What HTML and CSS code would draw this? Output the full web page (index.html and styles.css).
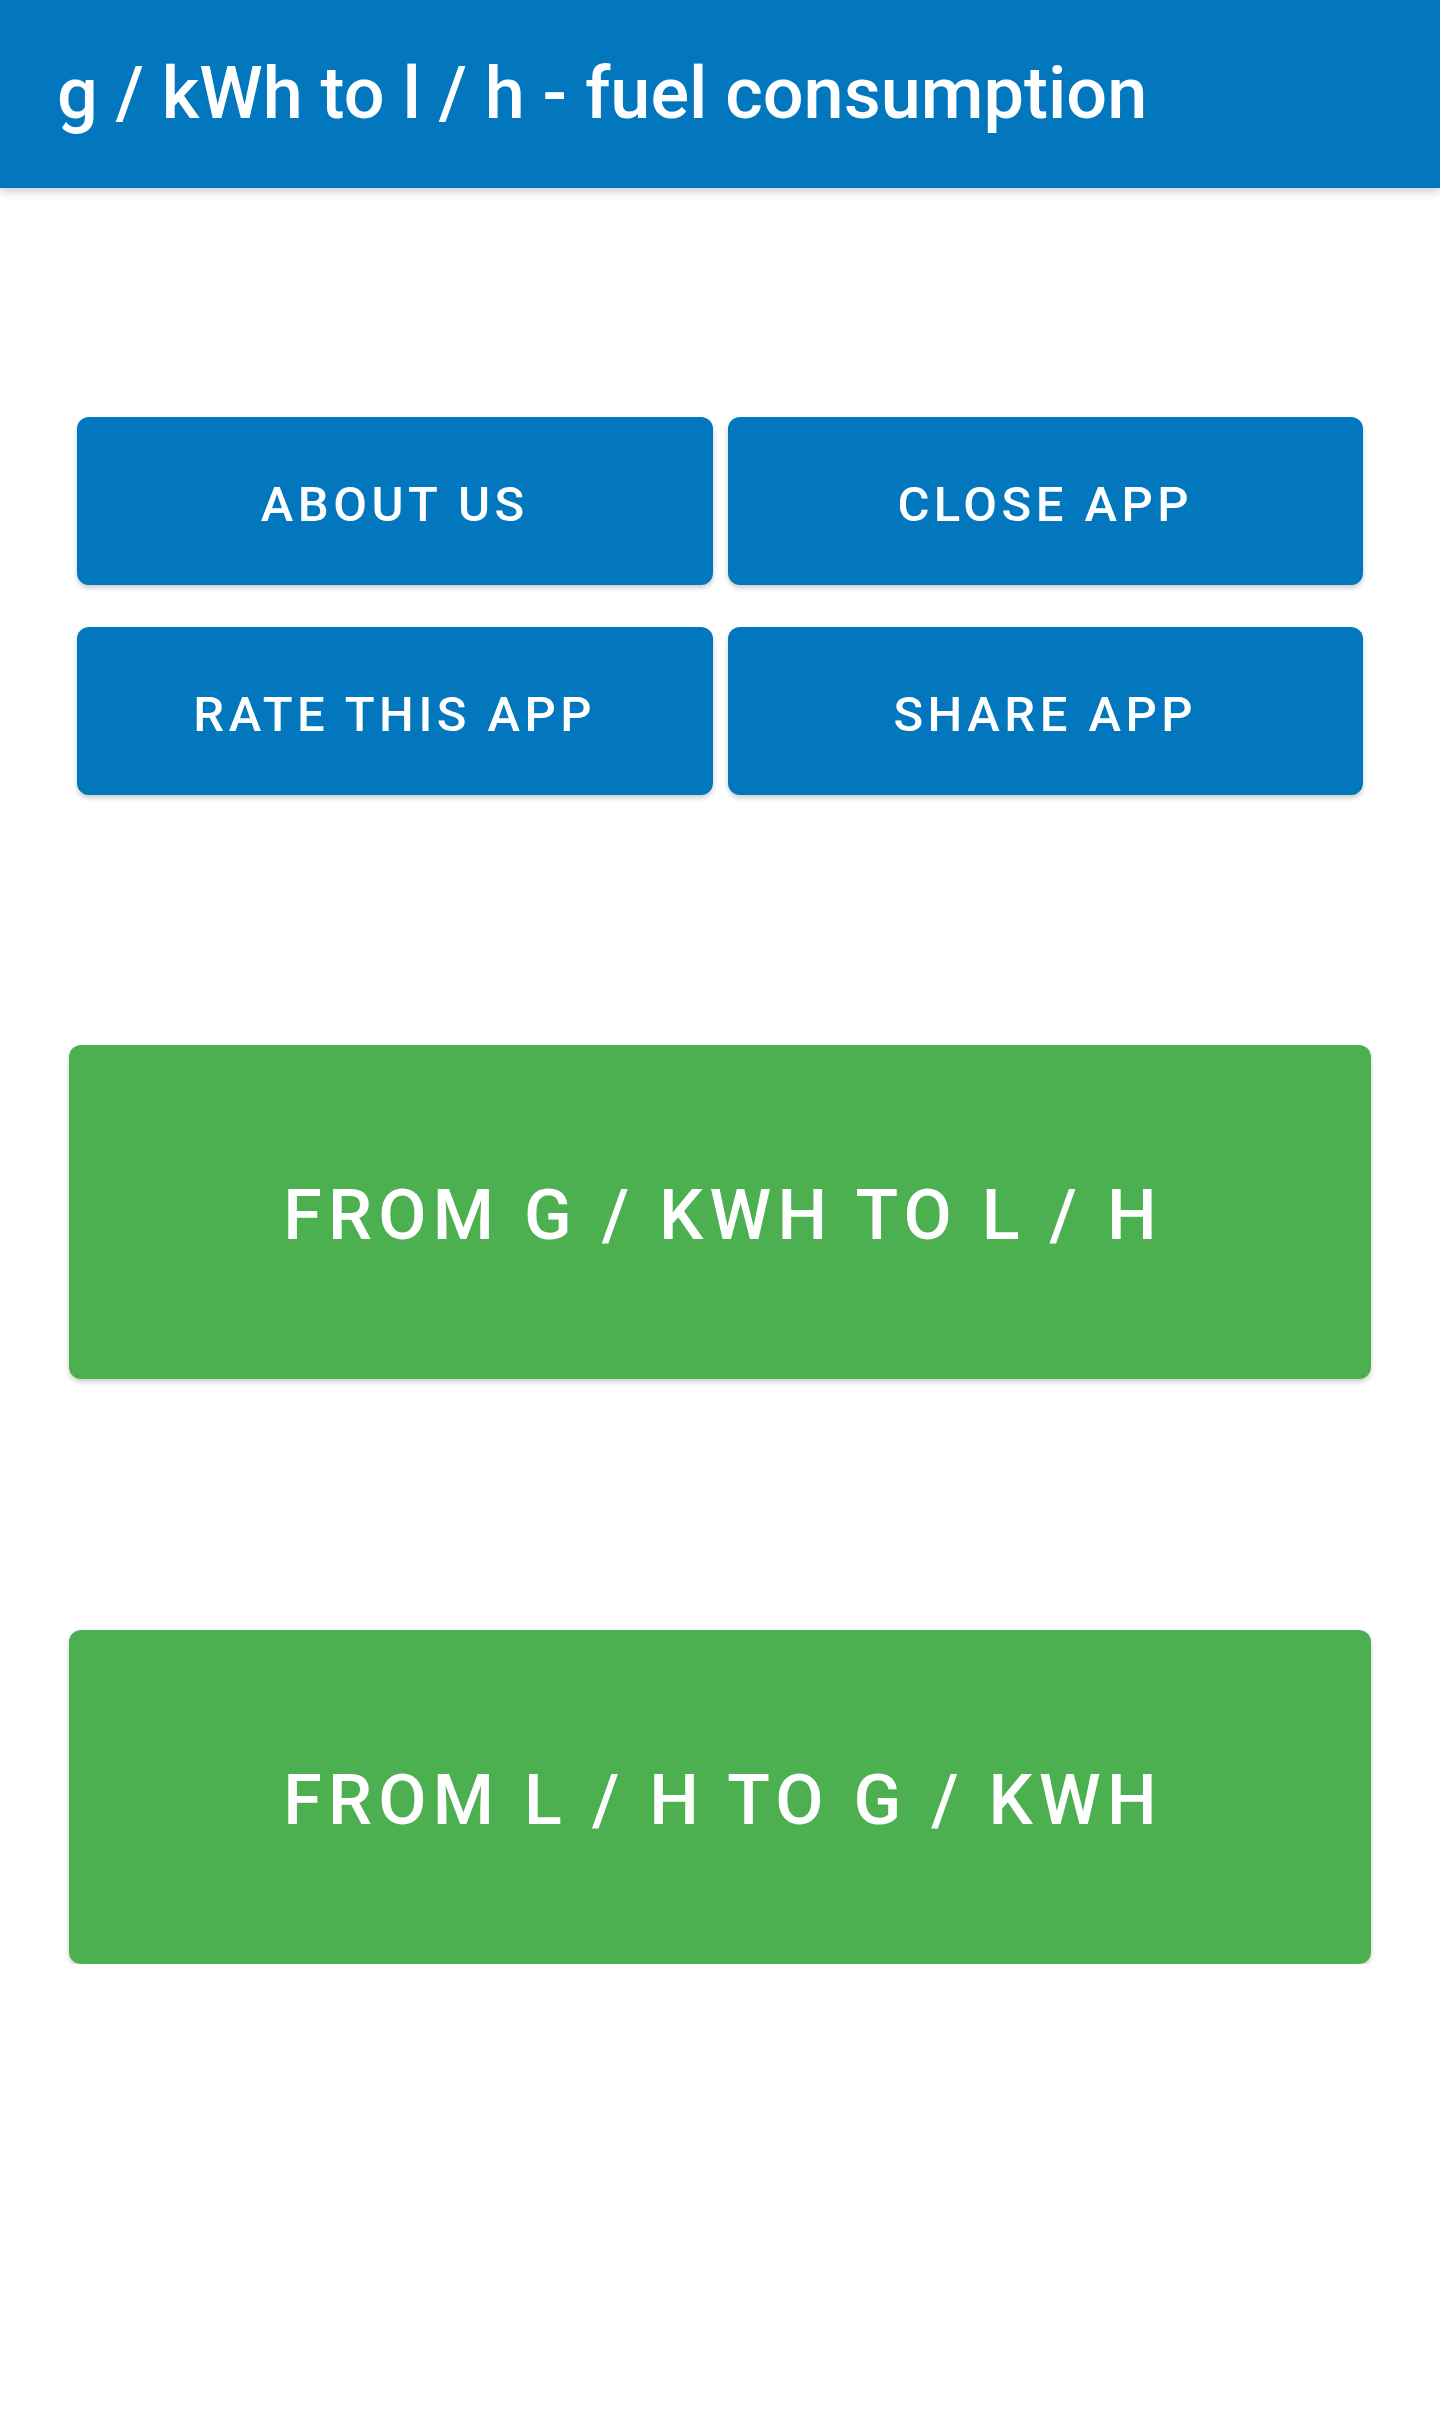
FILE: index.html
```html
<!doctype html>
<html lang="en">
<head>
    <meta charset="UTF-8">
    <title>g / kWh to l / h - fuel consumption</title>
    <link rel="stylesheet" href="styles.css">
</head>
<body>
    <div class="toolbar">
        <h1 class="toolbar-title">g / kWh to l / h - fuel consumption</h1>
    </div>
    <div class="content">
        <div class="menu-grid">
            <button class="btn btn-blue">About us</button>
            <button class="btn btn-blue">Close app</button>
            <button class="btn btn-blue">Rate this app</button>
            <button class="btn btn-blue">Share app</button>
        </div>
        <div class="convert">
            <button class="btn btn-green">From g / kWh to l / h</button>
            <button class="btn btn-green">From l / h to g / kWh</button>
        </div>
    </div>
</body>
</html>
```
FILE: styles.css
```css
*{
    margin: 0;
    padding: 0;
    box-sizing: border-box;
}
body{
    font-family: Roboto, "Noto Sans", sans-serif;
    background: #fff;
}
.toolbar{
    height: 188px;
    background: #0277BD;
    display: flex;
    align-items: center;
    padding-left: 57px;
    box-shadow: 0 4px 8px rgba(0,0,0,0.18);
    position: relative;
}
.toolbar-title{
    color: #fff;
    font-size: 72px;
    font-weight: 500;
    margin-bottom: 2px;
}
.content{
    padding: 229px 71px 0;
}
.menu-grid{
    display: grid;
    grid-template-columns: 1fr 1fr;
    column-gap: 15px;
    row-gap: 42px;
    padding: 0 6px;
}
.btn{
    border: none;
    color: #fff;
    font-family: Roboto, "Noto Sans", sans-serif;
    font-weight: 500;
    text-transform: uppercase;
    border-radius: 12px;
    box-shadow: 0 3px 5px rgba(0,0,0,0.2);
    padding-top: 6px;
}
.btn-blue{
    background: #0277BD;
    height: 168px;
    font-size: 49px;
    letter-spacing: 4.5px;
}
.btn-green{
    background: #4CAF50;
    height: 334px;
    font-size: 70px;
    letter-spacing: 6.3px;
    padding-left: 6px;
}
.convert{
    display: flex;
    flex-direction: column;
    gap: 251px;
    margin-top: 250px;
}
.convert .btn-green{
    margin: 0 -2px;
    width: calc(100% + 4px);
}
```
